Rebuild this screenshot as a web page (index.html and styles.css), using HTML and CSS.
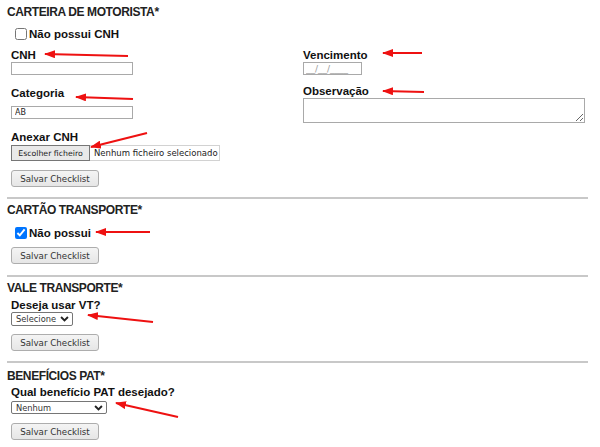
FILE: index.html
```html
<!DOCTYPE html>
<html lang="pt">
<head>
  <meta charset="UTF-8">
  <title>Checklist do colaborador</title>
  <link rel="stylesheet" href="styles.css">
</head>
<body>
  <section class="block first">
    <h2>CARTEIRA DE MOTORISTA*</h2>
    <label class="check"><input type="checkbox"> Não possui CNH</label>
    <div class="cols">
      <div class="col">
        <label class="lbl">CNH</label>
        <input class="txt" type="text">
        <label class="lbl lbl-cat">Categoria</label>
        <input class="txt" type="text" value="AB">
        <label class="lbl lbl-anexo">Anexar CNH</label>
        <div class="file"><span class="file-btn">Escolher ficheiro</span><span class="file-name">Nenhum ficheiro selecionado</span></div>
      </div>
      <div class="col">
        <label class="lbl">Vencimento</label>
        <input class="txt date" type="text" placeholder="__/__/____">
        <label class="lbl lbl-obs">Observação</label>
        <textarea class="obs"></textarea>
      </div>
    </div>
    <button class="save save-first">Salvar Checklist</button>
  </section>

  <section class="block second">
    <h2>CARTÃO TRANSPORTE*</h2>
    <label class="check"><input type="checkbox" checked> Não possui</label>
    <button class="save save-second">Salvar Checklist</button>
  </section>

  <section class="block third">
    <h2>VALE TRANSPORTE*</h2>
    <label class="lbl lbl-q">Deseja usar VT?</label>
    <div class="sel-wrap sel-vt">
      <select>
        <option>Selecione</option>
        <option>Sim</option>
        <option>Não</option>
      </select>
      <svg class="chev" viewBox="0 0 10 7"><path d="M1 1.2 L5 5.2 L9 1.2" fill="none" stroke="#222" stroke-width="2.2"/></svg>
    </div>
    <button class="save save-third">Salvar Checklist</button>
  </section>

  <section class="block last">
    <h2>BENEFÍCIOS PAT*</h2>
    <label class="lbl lbl-q2">Qual benefício PAT desejado?</label>
    <div class="sel-wrap sel-pat">
      <select>
        <option>Nenhum</option>
        <option>Vale refeição</option>
        <option>Vale alimentação</option>
      </select>
      <svg class="chev" viewBox="0 0 10 7"><path d="M1 1.2 L5 5.2 L9 1.2" fill="none" stroke="#222" stroke-width="2.2"/></svg>
    </div>
    <button class="save save-last">Salvar Checklist</button>
  </section>

  <!-- setas de anotação por cima do formulário -->
  <svg class="arrows" width="600" height="447" viewBox="0 0 600 447">
    <defs>
      <marker id="head" markerUnits="userSpaceOnUse" markerWidth="11" markerHeight="8" refX="10" refY="4" orient="auto">
        <path d="M0 0 L11 4 L0 8 Z" fill="#ee1111"/>
      </marker>
    </defs>
    <g stroke="#ee1111" stroke-width="2" marker-end="url(#head)">
      <line x1="128" y1="56" x2="45" y2="54"/>
      <line x1="133" y1="99" x2="76" y2="97"/>
      <line x1="422" y1="53" x2="383" y2="53"/>
      <line x1="424" y1="92" x2="383" y2="91"/>
      <line x1="147" y1="133" x2="91" y2="147"/>
      <line x1="150" y1="232" x2="96" y2="232"/>
      <line x1="153" y1="322" x2="88" y2="315"/>
      <line x1="178" y1="417" x2="116" y2="403"/>
    </g>
  </svg>
</body>
</html>
```

FILE: styles.css
```css
body {
  margin: 0;
  padding: 1px 12px 0 7px;
  font-family: "Liberation Sans", Arial, sans-serif;
  color: #111;
  background: #fff;
  position: relative;
}

.block { border-bottom: 2px solid #c8c8c8; padding: 4px 0 10px; }
.block.last { border-bottom: none; padding-top: 6px; }
.block.second { padding-bottom: 11px; }

h2 {
  margin: 0;
  font-size: 12px;
  line-height: 14px;
  letter-spacing: -0.4px;
  font-weight: bold;
  color: #222;
}

.check {
  display: flex;
  align-items: center;
  height: 19px;
  margin-top: 5px;
  font-size: 11.5px;
  font-weight: bold;
}
.second .check { margin-top: 6px; }
.check input { width: 12px; height: 12px; margin: 0 2px 0 8px; }

.cols {
  display: grid;
  grid-template-columns: 292px 1fr;
  margin-top: 6px;
  padding-left: 4px;
}
.col { display: flex; flex-direction: column; align-items: flex-start; }

.lbl {
  display: block;
  font-size: 11.5px;
  line-height: 13px;
  font-weight: bold;
}
.lbl-cat { margin-top: 12px; margin-bottom: 6px; }
.lbl-anexo { margin-top: 12px; margin-bottom: 1px; }
.lbl-obs { margin-top: 10px; }
.lbl-q { margin: 4px 0 0 4px; }
.lbl-q2 { margin: 3px 0 0 4px; }

.txt {
  display: block;
  box-sizing: border-box;
  width: 122px;
  height: 13px;
  margin: 0;
  padding: 0 3px;
  border: 1px solid #a9a9a9;
  font-family: "DejaVu Sans", sans-serif;
  font-size: 8px;
  color: #222;
}
.date { width: 59px; font-size: 9px; padding: 0 2px; }
.date::placeholder { color: #9a9a9a; }

.obs {
  box-sizing: border-box;
  width: 282px;
  height: 25px;
  margin: 0;
  border: 1px solid #a9a9a9;
  resize: both;
}

.file {
  display: flex;
  align-items: stretch;
  box-sizing: border-box;
  width: 209px;
  height: 16px;
  border: 1px solid #d2d2d2;
  font-family: "DejaVu Sans", sans-serif;
  font-size: 7.8px;
  color: #222;
}
.file-btn {
  display: flex;
  align-items: center;
  justify-content: center;
  width: 77px;
  margin: -1px 0 -1px -1px;
  background: #e9e9e9;
  border: 1px solid #767676;
}
.file-name { display: flex; align-items: center; padding-left: 4px; white-space: nowrap; font-size: 8.5px; }

.sel-wrap { position: relative; margin-left: 4px; }
.sel-vt { width: 62px; }
.sel-pat { width: 96px; margin-top: 2px; }
.sel-wrap select {
  appearance: none;
  display: block;
  box-sizing: border-box;
  width: 100%;
  height: 14px;
  margin: 0;
  padding: 0 0 0 4px;
  border: 1px solid #767676;
  border-radius: 2px;
  background: #fff;
  font-family: "DejaVu Sans", sans-serif;
  font-size: 8.3px;
  color: #333;
}
.sel-pat select { height: 13px; }
.chev { position: absolute; right: 4px; top: 4px; width: 9px; height: 6px; pointer-events: none; }

.save {
  display: block;
  box-sizing: border-box;
  width: 88px;
  height: 17px;
  margin: 10px 0 0 4px;
  padding: 0;
  background: linear-gradient(#f4f4f4, #e6e6e6);
  border: 1px solid #adadad;
  border-radius: 3px;
  font-family: "DejaVu Sans", sans-serif;
  font-size: 8.7px;
  color: #333;
}
.save-first { margin-top: 9px; }
.save-second { margin-top: 5px; }
.save-third { margin-top: 8px; }
.save-last { margin-top: 9px; }

.arrows { position: absolute; top: 0; left: 0; pointer-events: none; }
```
